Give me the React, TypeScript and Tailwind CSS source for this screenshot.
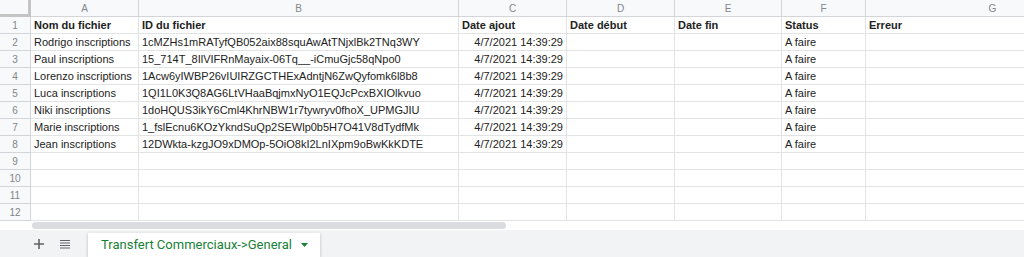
import React from "react";

const cols = [
  { key: "A", w: 108 },
  { key: "B", w: 320 },
  { key: "C", w: 108 },
  { key: "D", w: 108 },
  { key: "E", w: 107 },
  { key: "F", w: 84 },
  { key: "G", w: 254 },
];

const header = ["Nom du fichier", "ID du fichier", "Date ajout", "Date début", "Date fin", "Status", "Erreur"];

const data: string[][] = [
  ["Rodrigo inscriptions", "1cMZHs1mRATyfQB052aix88squAwAtTNjxlBk2TNq3WY"],
  ["Paul inscriptions", "15_714T_8IlVIFRnMayaix-06Tq__-iCmuGjc58qNpo0"],
  ["Lorenzo inscriptions", "1Acw6yIWBP26vIUIRZGCTHExAdntjN6ZwQyfomk6l8b8"],
  ["Luca inscriptions", "1QI1L0K3Q8AG6LtVHaaBqjmxNyO1EQJcPcxBXIOlkvuo"],
  ["Niki inscriptions", "1doHQUS3ikY6Cml4KhrNBW1r7tywryv0fhoX_UPMGJIU"],
  ["Marie inscriptions", "1_fslEcnu6KOzYkndSuQp2SEWlp0b5H7O41V8dTydfMk"],
  ["Jean inscriptions", "12DWkta-kzgJO9xDMOp-5OiO8kI2LnIXpm9oBwKkKDTE"],
];

function Row({ n, cells, bold }: { n: number; cells: (string | null)[]; bold?: boolean }) {
  return (
    <div className="flex h-[17px] shrink-0">
      <div className="w-[31px] shrink-0 bg-[#f8f9fa] border-r border-b border-[#d3d5d8] flex items-center justify-center text-[10px] text-[#80868b]">
        {n}
      </div>
      {cols.map((c, i) => {
        const v = cells[i] ?? "";
        const right = !bold && i === 2;
        return (
          <div
            key={c.key}
            style={{ width: c.w }}
            className={
              "shrink-0 border-r border-b border-[#e2e3e3] flex items-center overflow-hidden whitespace-nowrap px-[3px] text-[11px] text-[#222222] " +
              (right ? "justify-end pr-[3px] " : "") +
              (bold ? "font-bold" : "")
            }
          >
            {v}
          </div>
        );
      })}
    </div>
  );
}

export default function App() {
  const rows: (string | null)[][] = [];
  rows.push(header);
  data.forEach((d) => rows.push([d[0], d[1], "4/7/2021 14:39:29", "", "", "A faire", ""]));
  for (let i = 0; i < 4; i++) rows.push(["", "", "", "", "", "", ""]);

  return (
    <div
      className="w-[1024px] h-[257px] overflow-hidden bg-white flex flex-col"
      style={{ fontFamily: '"Liberation Sans", Arial, sans-serif' }}
    >
      <div className="flex-none overflow-hidden">
        {/* column header */}
        <div className="flex h-[17px]">
          <div className="w-[31px] shrink-0 bg-[#f8f9fa] border-r-[3px] border-b-[3px] border-[#c4c4c4]" />
          {cols.map((c) => (
            <div
              key={c.key}
              style={{ width: c.w }}
              className="shrink-0 bg-[#f8f9fa] border-r border-b border-[#d3d5d8] flex items-center justify-center text-[10px] text-[#80868b]"
            >
              {c.key}
            </div>
          ))}
        </div>
        {rows.map((r, i) => (
          <Row key={i} n={i + 1} cells={r} bold={i === 0} />
        ))}
      </div>
      {/* scrollbar strip */}
      <div className="h-[9px] flex-none flex items-center pl-[32px]">
        <div className="h-[7px] w-[474px] rounded-full bg-[#dadce0]" />
      </div>
      {/* bottom tab bar */}
      <div className="flex-1 bg-[#f1f3f4] flex items-end">
        <div className="flex items-center h-full pl-[33px] gap-[14px] text-[#5f6368]">
          <svg width="12" height="12" viewBox="0 0 12 12">
            <path d="M6 1v10M1 6h10" stroke="#5f6368" strokeWidth="1.6" />
          </svg>
          <svg width="12" height="10" viewBox="0 0 12 10">
            <path d="M1 1.5h10M1 4h10M1 6.5h10M1 9h10" stroke="#5f6368" strokeWidth="1.2" />
          </svg>
        </div>
        <div className="ml-[17px] h-[24px] w-[232px] bg-white shadow-[0_1px_3px_rgba(60,64,67,0.3)] flex items-center pl-[13px] gap-[9px]">
          <span
            className="text-[13px] font-normal text-[#188038] whitespace-nowrap"
            style={{ fontFamily: "Roboto, Arial, sans-serif" }}
          >
            Transfert Commerciaux-&gt;General
          </span>
          <svg width="7" height="4" viewBox="0 0 7 4">
            <path d="M0 0h7L3.5 4z" fill="#188038" />
          </svg>
        </div>
      </div>
    </div>
  );
}
